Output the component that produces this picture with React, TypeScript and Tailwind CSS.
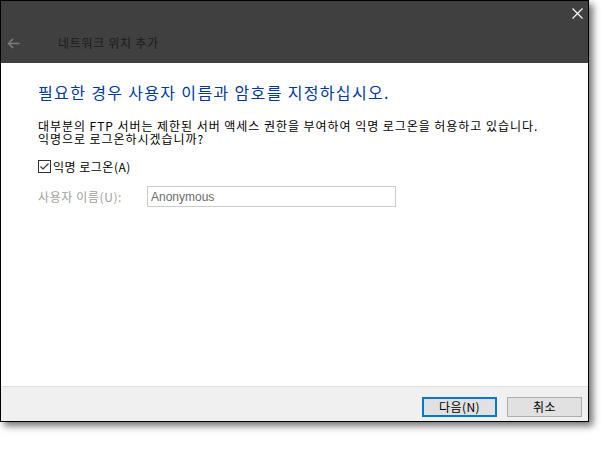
import React from "react";

const CloseIcon = () => (
  <svg width="11" height="11" viewBox="0 0 11 11" className="block">
    <path d="M0.5 0.5 L10.5 10.5 M10.5 0.5 L0.5 10.5" stroke="#ffffff" strokeWidth="1.1" fill="none" />
  </svg>
);

const BackIcon = () => (
  <svg width="13" height="11" viewBox="0 0 13 11" className="block">
    <path d="M12.5 5.5 H1.5 M6 1 L1.5 5.5 L6 10" stroke="#7b7b7b" strokeWidth="1.6" fill="none" />
  </svg>
);

const CheckBox = () => (
  <svg width="13" height="13" viewBox="0 0 13 13" className="block">
    <rect x="0.5" y="0.5" width="12" height="12" fill="#ffffff" stroke="#333333" />
    <path d="M2.5 6.5 L5 9 L10.5 3.5" stroke="#333333" strokeWidth="1.2" fill="none" />
  </svg>
);

export default function App() {
  return (
    <div className="w-[601px] h-[449px] bg-white overflow-hidden font-['Noto_Sans_CJK_KR',sans-serif]">
      <div className="w-[589px] h-[422px] border border-black flex flex-col shadow-[4px_4px_7px_rgba(0,0,0,0.55)]">
        {/* title bar */}
        <div className="h-[62px] bg-[#404040] flex flex-col">
          <div className="flex justify-end pt-[7px] pr-[5px]">
            <CloseIcon />
          </div>
          <div className="flex items-center h-[20px] mt-[14px] pl-[6px]">
            <BackIcon />
            <span className="ml-[38px] text-[12px] leading-[20px] tracking-[0.7px] text-[#1c1c1c]">네트워크 위치 추가</span>
          </div>
        </div>

        {/* content */}
        <div className="flex-1 bg-white pl-[37px] pt-[18px] flex flex-col">
          <h1 className="text-[16px] leading-[22px] tracking-[1.35px] text-[#0037a8] font-normal">
            필요한 경우 사용자 이름과 암호를 지정하십시오.
          </h1>
          <p className="mt-[16px] text-[12px] leading-[13px] tracking-[0.95px] text-black">
            대부분의 FTP 서버는 제한된 서버 액세스 권한을 부여하여 익명 로그온을 허용하고 있습니다.
            <br />
            익명으로 로그온하시겠습니까?
          </p>
          <label className="mt-[15px] flex items-center h-[13px] gap-[2px] text-[12px] text-black">
            <CheckBox />
            <span className="leading-[13px] tracking-[0.5px]">익명 로그온(A)</span>
          </label>
          <div className="mt-[13px] flex items-center">
            <span className="w-[109px] text-[12px] leading-[20px] tracking-[0.6px] text-[#a0a0a0]">사용자 이름(U):</span>
            <div className="w-[249px] h-[21px] border border-[#cccccc] bg-white flex items-center pl-[3px] text-[12px] text-[#6d6d6d] font-['Liberation_Sans',sans-serif]">
              Anonymous
            </div>
          </div>
        </div>

        {/* footer */}
        <div className="h-[35px] border-t border-[#dfdfdf] bg-[#f0f0f0] flex justify-end items-start pt-[10px] pr-[6px] gap-[10px]">
          <button className="w-[75px] h-[20px] border-2 border-[#0078d7] bg-[#e1e1e1] text-[12px] leading-[16px] tracking-[0.4px] text-black">
            다음(N)
          </button>
          <button className="w-[75px] h-[20px] border border-[#adadad] bg-[#e1e1e1] text-[12px] leading-[18px] tracking-[0.4px] text-black">
            취소
          </button>
        </div>
      </div>
    </div>
  );
}
